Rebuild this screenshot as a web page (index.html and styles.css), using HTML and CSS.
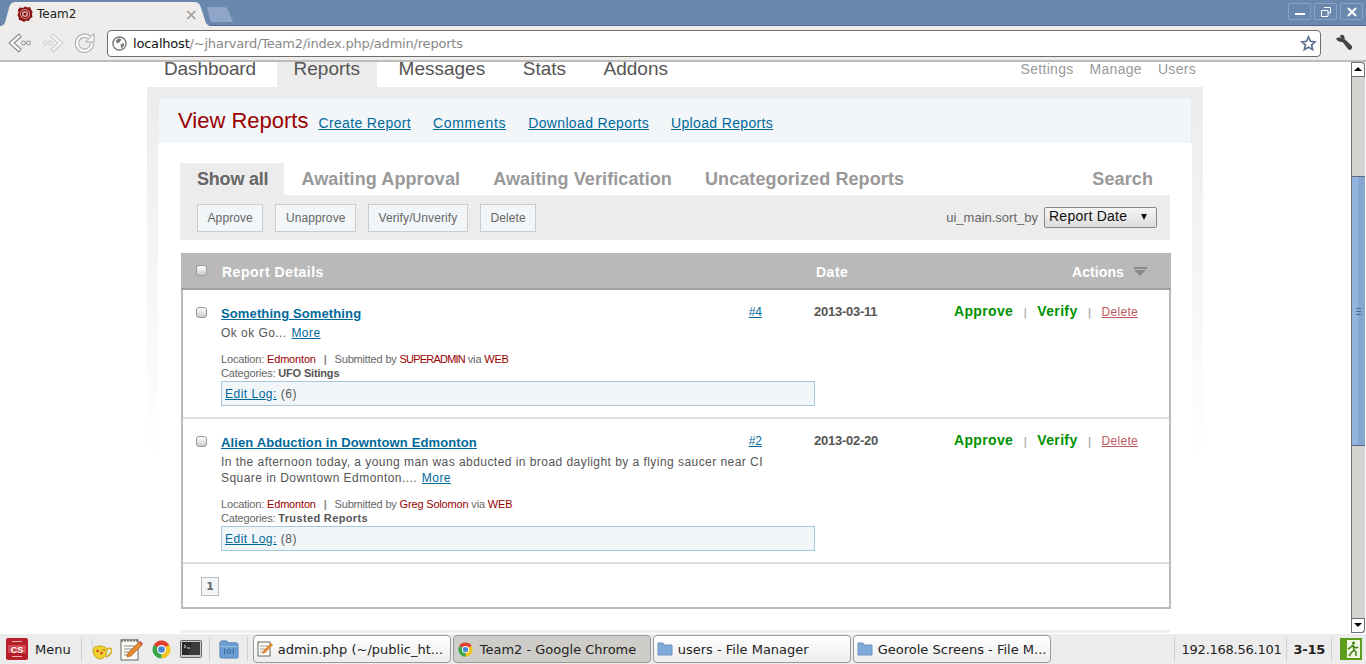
FILE: index.html
```html
<!DOCTYPE html>
<html lang="en">
<head>
  <meta charset="UTF-8" />
  <title>Team2</title>
  <link rel="stylesheet" href="styles.css">
</head>
<body>

<div class="desktop">

  <div class="tabstrip">
    <div class="tab">
      <svg class="favicon" width="16" height="16" viewBox="0 0 16 16"><path d="M3 1.500L6 2 8 .5 10.500 1.500 13 1l1 2.500 1.500 2-.5 3 .5 2.500-2.500 1.500L12 15l-3-.5-2 1.500-2.500-1.500L2 14l-.5-3L.5 9l1-2.500L1 3.500z" fill="#8e1414"/><circle cx="8" cy="8" r="5" fill="#d9a9a9"/><circle cx="8" cy="8" r="3.600" fill="none" stroke="#8e1414" stroke-width="1.200"/><circle cx="8" cy="8" r="1.500" fill="#8e1414"/></svg>
      <span class="tab-title">Team2</span>
      <span class="tab-close">×</span>
    </div>
    <div class="newtab"></div>
    <div class="winbtns">
      <div class="winbtn"><svg width="12" height="12" viewBox="0 0 12 12"><rect x="1" y="7" width="10" height="2" fill="#fff"/></svg></div>
      <div class="winbtn"><svg width="12" height="12" viewBox="0 0 12 12"><path d="M4 1.500h6.500v5.500H8M1.500 4.500H8v6H1.500z" fill="none" stroke="#fff"/></svg></div>
      <div class="winbtn"><svg width="12" height="12" viewBox="0 0 12 12"><path d="M2 2l8 8M10 2l-8 8" stroke="#fff" stroke-width="2"/></svg></div>
    </div>
  </div>

  <div class="toolbar">
    <svg class="navbtn" width="24" height="20" viewBox="0 0 24 20"><path d="M1 10L11 1l2 3-7 6 7 6-2 3z" fill="#fff" stroke="#8f8f8f" stroke-width="1.200" stroke-linejoin="round"/><circle cx="15.500" cy="10" r="2" fill="none" stroke="#8f8f8f"/><circle cx="20.500" cy="10" r="2" fill="none" stroke="#8f8f8f"/></svg>
    <svg class="navbtn" width="22" height="20" viewBox="0 0 22 20"><path d="M21 10L11 1 9 4l7 6-7 6 2 3z" fill="#f6f6f6" stroke="#cfcfcf" stroke-width="1.200" stroke-linejoin="round"/><circle cx="3" cy="10" r="2" fill="none" stroke="#cfcfcf"/><circle cx="8" cy="10" r="2" fill="none" stroke="#cfcfcf"/></svg>
    <svg class="navbtn" width="22" height="22" viewBox="0 0 22 22"><path d="M18 11.500a7.500 7.500 0 1 1-2.500-5.800" fill="none" stroke="#a8a8a8" stroke-width="4.400"/><path d="M18 11.500a7.500 7.500 0 1 1-2.500-5.800" fill="none" stroke="#f8f8f8" stroke-width="2.400"/><path d="M20 1.500v8.500h-8.500z" fill="#f8f8f8" stroke="#a8a8a8"/></svg>
    <div class="omnibox">
      <svg width="15" height="15" viewBox="0 0 16 16"><circle cx="8" cy="8" r="7" fill="#fff" stroke="#7a7a7a" stroke-width="1.500"/><path d="M4 5l3-2.500 3 1-1.500 3L5.500 8zM9 9l3.500-1.500L13 10l-3 3.500z" fill="#7a7a7a"/></svg>
      <span class="url"><b>localhost</b>/~jharvard/Team2/index.php/admin/reports</span>
      <svg width="17" height="17" viewBox="0 0 18 18"><path d="M9 2l2.100 4.700 5 .5-3.800 3.300 1.100 5L9 13l-4.400 2.500 1.100-5L1.900 7.200l5-.5z" fill="#fff" stroke="#5f6f8f" stroke-width="1.800"/></svg>
    </div>
    <svg class="wrench" width="18" height="18" viewBox="0 0 18 18"><path d="M1 4.500L4 3 6 4.500 5 1.500C8-.5 10 2 9.500 5L17 12c.5 1 0 2.500-1 3.500s-2 .5-3-.5L7.500 8C4.500 8.500 2 7 1 4.500z" fill="#444"/></svg>
  </div>

  <div class="viewport">
    <div class="page">

      <div class="topnav">
        <ul class="mainnav">
          <li>Dashboard</li>
          <li class="active">Reports</li>
          <li>Messages</li>
          <li>Stats</li>
          <li>Addons</li>
        </ul>
        <ul class="subnav">
          <li>Settings</li>
          <li>Manage</li>
          <li>Users</li>
        </ul>
      </div>

      <div class="panel">
        <div class="inner">
          <div class="pagehead">
            <h2>View Reports</h2>
            <a href="#">Create Report</a>
            <a class="spaced" href="#">Comments</a>
            <a href="#">Download Reports</a>
            <a href="#">Upload Reports</a>
          </div>

          <div class="content">
            <div class="filters">
              <span class="filter active">Show all</span>
              <span class="filter">Awaiting Approval</span>
              <span class="filter">Awaiting Verification</span>
              <span class="filter">Uncategorized Reports</span>
              <span class="filter search">Search</span>
            </div>
            <div class="actionbar">
              <button class="actbtn">Approve</button>
              <button class="actbtn">Unapprove</button>
              <button class="actbtn">Verify/Unverify</button>
              <button class="actbtn">Delete</button>
              <span class="sortlabel">ui_main.sort_by</span>
              <div class="sortselect">Report Date <i></i></div>
            </div>

            <div class="table">
              <div class="thead">
                <span class="check"></span>
                <span class="th-details">Report Details</span>
                <span class="th-date">Date</span>
                <span class="th-actions">Actions <i></i></span>
              </div>

              <div class="row">
                <span class="check"></span>
                <div class="details">
                  <div class="titleline">
                    <a class="title" href="#">Something Something</a>
                    <a class="num" href="#">#4</a>
                  </div>
                  <p class="desc">Ok ok Go... <a href="#">More</a></p>
                  <p class="meta first">Location: <em>Edmonton</em> <s>|</s> Submitted by <em class="caps">SUPERADMIN</em> via <em>WEB</em></p>
                  <p class="meta">Categories: <b>UFO Sitings</b></p>
                  <div class="editlog"><a href="#">Edit Log:</a> (6)</div>
                </div>
                <div class="date">2013-03-11</div>
                <div class="rowacts">
                  <a class="go" href="#">Approve</a><s>|</s><a class="go" href="#">Verify</a><s>|</s><a class="del" href="#">Delete</a>
                </div>
              </div>

              <div class="row">
                <span class="check"></span>
                <div class="details">
                  <div class="titleline">
                    <a class="title" href="#">Alien Abduction in Downtown Edmonton</a>
                    <a class="num" href="#">#2</a>
                  </div>
                  <p class="desc">In the afternoon today, a young man was abducted in broad daylight by a flying saucer near CI<br>Square in Downtown Edmonton.... <a href="#">More</a></p>
                  <p class="meta first">Location: <em>Edmonton</em> <s>|</s> Submitted by <em>Greg Solomon</em> via <em>WEB</em></p>
                  <p class="meta">Categories: <b class="wide">Trusted Reports</b></p>
                  <div class="editlog"><a href="#">Edit Log:</a> (8)</div>
                </div>
                <div class="date">2013-02-20</div>
                <div class="rowacts">
                  <a class="go" href="#">Approve</a><s>|</s><a class="go" href="#">Verify</a><s>|</s><a class="del" href="#">Delete</a>
                </div>
              </div>

              <div class="pager"><span>1</span></div>
            </div>
            <div class="nextblock"></div>
          </div>
        </div>
      </div>

    </div>

    <div class="scrollbar">
      <div class="sb-btn up"></div>
      <div class="sb-trough top"></div>
      <div class="sb-thumb"><i></i></div>
      <div class="sb-trough bottom"></div>
      <div class="sb-btn down"></div>
    </div>
  </div>

  <div class="taskbar">
    <svg class="csmenu" width="22" height="22" viewBox="0 0 22 22"><rect width="22" height="22" rx="2" fill="#b5202a"/><rect x="2" y="7" width="18" height="8" fill="#cf4a52"/><path d="M6 3.500h10M6 18.500h10" stroke="#e9a9ad"/><text x="11" y="14.500" font-size="9" font-weight="bold" font-family="Liberation Sans" fill="#fff" text-anchor="middle">CS</text></svg>
    <span class="menu-label">Menu</span>
    <span class="sep"></span>
    <svg class="launcher pot" width="22" height="24" viewBox="0 0 22 24"><path d="M3 3C1 6 2 9 4 11" fill="none" stroke="#d8d8d8" stroke-width="1.500"/><circle cx="3" cy="2.500" r="1.500" fill="#e4e4e4"/><path d="M3 13c0-3 4-4 7-4s7 1 7 4c0 5-3 9-7 9s-7-4-7-9z" fill="#eed030" stroke="#c4a215"/><path d="M17 12c4-2 6 1 4 4-1 1.500-3 3-5 4" fill="none" stroke="#d2b020" stroke-width="1.600"/><path d="M6 14l1.500-1.500L9 14l-1.500 1.500zM10 16l1.500-1.500L13 16l-1.500 1.500zM13 13l1-1 1 1-1 1z" fill="#c83020"/></svg>
    <svg class="launcher" width="23" height="23" viewBox="0 0 23 23"><rect x="1" y="2" width="17" height="20" fill="#fbfbf4" stroke="#666"/><path d="M2 1v3M5 1v3M8 1v3M11 1v3M14 1v3M17 1v3" stroke="#555"/><path d="M4 8h11M4 11h11M4 14h8M4 17h6" stroke="#888"/><path d="M7 19l1-4L19 4l3 3L11 18z" fill="#e88a30" stroke="#a04a10" stroke-width=".6"/><path d="M19 4l3 3 1-1-3-3z" fill="#d03030"/></svg>
    <svg class="launcher chrome" width="19" height="19" viewBox="0 0 20 20"><path d="M1.800 5.250A9.500 9.500 0 0 1 18.200 5.250L10 10z" fill="#df3f2f"/><path d="M18.200 5.250A9.500 9.500 0 0 1 10 19.500L10 10z" fill="#f3c520"/><path d="M10 19.500A9.500 9.500 0 0 1 1.800 5.250L10 10z" fill="#3aa648"/><circle cx="10" cy="10" r="4.700" fill="#fff"/><circle cx="10" cy="10" r="3.500" fill="#4a86d8"/></svg>
    <svg class="launcher term" width="22" height="18" viewBox="0 0 22 18"><rect x=".5" y=".5" width="21" height="17" rx="1" fill="#c8c8c8" stroke="#666"/><rect x="2" y="2" width="18" height="13" fill="#2a2a2a"/><path d="M12 2h8v13h-11z" fill="#3c3c3c"/><path d="M4 5l2 1.500L4 8" fill="none" stroke="#ddd"/><rect x="7" y="7.500" width="3" height="1" fill="#ddd"/></svg>
    <span class="sep sep-b"></span>
    <svg class="launcher files" width="20" height="19" viewBox="0 0 21 20"><path d="M1 3c0-1 1-2 2-2h5l2 2h8c1 0 2 1 2 2v13c0 .5-.5 1-1 1H2c-.5 0-1-.5-1-1z" fill="#6d9fd4" stroke="#4d7fb4"/><path d="M1 7h19" stroke="#9cc0e6"/><circle cx="10.500" cy="12" r="2" fill="none" stroke="#2f5f94"/><path d="M6 9v6M15 9v6" stroke="#2f5f94"/></svg>
    <span class="sep sep-c"></span>

    <div class="task">
      <svg width="16" height="16" viewBox="0 0 16 16"><rect x="1" y="1" width="12" height="14" fill="#fbfbf4" stroke="#666"/><path d="M3 5h8M3 8h8M3 11h5" stroke="#999"/><path d="M5 13l1-3 8-8 2 2-8 8z" fill="#e08a30"/></svg>
      <span>admin.php (~/public_ht...</span>
    </div>
    <div class="task current">
      <svg class="taskchrome" width="15" height="15" viewBox="0 0 20 20"><path d="M1.800 5.250A9.500 9.500 0 0 1 18.200 5.250L10 10z" fill="#df3f2f"/><path d="M18.200 5.250A9.500 9.500 0 0 1 10 19.500L10 10z" fill="#f3c520"/><path d="M10 19.500A9.500 9.500 0 0 1 1.800 5.250L10 10z" fill="#3aa648"/><circle cx="10" cy="10" r="4.700" fill="#fff"/><circle cx="10" cy="10" r="3.500" fill="#4a86d8"/></svg>
      <span>Team2 - Google Chrome</span>
    </div>
    <div class="task">
      <svg width="16" height="14" viewBox="0 0 16 14"><path d="M1 1h5l1 2h8v10H1z" fill="#7fa8d6" stroke="#6b94c2"/></svg>
      <span>users - File Manager</span>
    </div>
    <div class="task">
      <svg width="16" height="14" viewBox="0 0 16 14"><path d="M1 1h5l1 2h8v10H1z" fill="#7fa8d6" stroke="#6b94c2"/></svg>
      <span>Georole Screens - File M...</span>
    </div>

    <span class="sep tray-start"></span>
    <span class="tray">192.168.56.101</span>
    <span class="sep"></span>
    <span class="tray clock">3-15</span>
    <span class="sep"></span>
    <svg class="exit" width="22" height="22" viewBox="0 0 22 22"><rect width="22" height="22" fill="#5c9e1c"/><rect x="7" y="2" width="13" height="18" fill="#eef6e4"/><circle cx="13.500" cy="5" r="1.500" fill="#3c7e0c"/><path d="M13 7l-3 3-2 1M13 7l1 5 2 2v4M14 12l-3 3-2 3M13 8l3 2 2-1" fill="none" stroke="#3c7e0c" stroke-width="1.500"/></svg>
  </div>

</div>

</body>
</html>
```

FILE: styles.css
```css
html, body {
  margin: 0;
  padding: 0;
  height: 100%;
  overflow: hidden;
}

body {
  font-family: "Liberation Sans", Arial, sans-serif;
  color: #555;
}

p, ul, h2 {
  margin: 0;
  padding: 0;
}

ul {
  list-style: none;
}

s {
  text-decoration: none;
}

em {
  font-style: normal;
}

.desktop {
  width: 1366px;
  height: 664px;
  display: flex;
  flex-direction: column;
}

/* browser chrome */

.tabstrip {
  height: 26px;
  flex: none;
  background: #6a88ae;
  border-bottom: 1px solid #4f6a8c;
  box-sizing: border-box;
  display: flex;
  align-items: flex-end;
}

.tab {
  width: 212px;
  height: 24px;
  margin-bottom: -1px;
  background: #eeedeb;
  clip-path: path("M0 24C4 24 5 21 6 17L9 6C10 2 12 0 16 0L194 0C198 0 200 2 201 6L205 18C206 22 208 24 212 24Z");
  display: flex;
  align-items: center;
  box-sizing: border-box;
  padding-left: 17px;
  font-family: "DejaVu Sans", sans-serif;
  font-size: 12px;
  color: #222;
}

.favicon {
  margin-right: 4px;
}

.tab-title {
  flex: 1;
}

.tab-close {
  font-size: 16px;
  color: #999;
  margin-right: 14px;
}

.newtab {
  width: 26px;
  height: 15px;
  margin: 0 0 3px -5px;
  background: #8fa6c8;
  clip-path: path("M0 0L17 0C19 0 20 1 21 3L26 15L6 15C4 15 3 14 3 12Z");
}

.winbtns {
  margin-left: auto;
  margin-bottom: 5px;
  margin-right: 3px;
  display: flex;
  gap: 3px;
}

.winbtn {
  width: 23px;
  height: 17px;
  border: 1px solid #8aa3c2;
  border-radius: 2px;
  box-sizing: border-box;
  display: flex;
  align-items: center;
  justify-content: center;
}

.toolbar {
  height: 36px;
  flex: none;
  background: #eeedeb;
  border-bottom: 2px solid #bdbcb8;
  box-sizing: border-box;
  display: flex;
  align-items: center;
  padding-left: 8px;
}

.navbtn {
  margin-right: 10px;
}

.omnibox {
  width: 1214px;
  height: 27px;
  margin-left: 1px;
  background: #fff;
  border: 1px solid #6e6e6e;
  border-radius: 4px;
  box-sizing: border-box;
  display: flex;
  align-items: center;
  padding: 0 3px 0 4px;
  font-family: "DejaVu Sans", sans-serif;
  font-size: 13px;
  letter-spacing: -.2px;
  color: #888;
}

.url {
  margin-left: 6px;
  flex: 1;
}

.url b {
  font-weight: normal;
  color: #111;
}

.wrench {
  margin-left: 14px;
}

/* page area */

.viewport {
  height: 572px;
  flex: none;
  display: flex;
  overflow: hidden;
  background: #fff;
}

.page {
  flex: 1;
  min-width: 0;
  overflow: hidden;
  padding-left: 147px;
}

.topnav {
  width: 1056px;
  height: 25px;
  display: flex;
  justify-content: space-between;
}

.mainnav {
  display: flex;
  font-size: 19px;
  line-height: 14px;
  color: #555;
}

.mainnav li {
  padding: 0 17px;
  height: 25px;
  margin-right: 3.5px;
}

.mainnav li:first-child {
  letter-spacing: -.1px;
}

.mainnav li.active {
  background: #ececec;
  margin-right: 4.5px;
}

.subnav {
  display: flex;
  gap: 16px;
  font-size: 14px;
  line-height: 14px;
  letter-spacing: .3px;
  color: #999;
  padding-right: 7px;
}

.panel {
  width: 1056px;
  padding: 11px 11px 0;
  box-sizing: border-box;
  background: linear-gradient(#ececec, #fff 370px);
}

.inner {
  background: #fff;
}

.pagehead {
  height: 45px;
  background: #f2f6f9;
  border: 1px solid #e6edf1;
  border-bottom: 0;
  box-sizing: border-box;
  display: flex;
  align-items: center;
  padding-left: 19px;
  font-size: 14px;
}

.pagehead h2 {
  font-size: 22px;
  font-weight: normal;
  color: #990000;
  margin-right: 10px;
}

.pagehead a {
  color: #00699b;
  margin-right: 22px;
  padding-top: 4px;
  letter-spacing: .35px;
}

.pagehead a.spaced {
  letter-spacing: .7px;
}

.content {
  padding: 20px 22px 0;
}

/* filter tabs */

.filters {
  display: flex;
  height: 32px;
  font-size: 18px;
  font-weight: bold;
  letter-spacing: .1px;
  color: #999;
  line-height: 32px;
}

.filter {
  padding: 0 16px 0 17px;
}

.filter.active {
  background: #ececec;
  color: #666;
  letter-spacing: -.2px;
}

.filter.search {
  margin-left: auto;
  padding-right: 17px;
}

.actionbar {
  height: 45px;
  background: #ececec;
  display: flex;
  align-items: center;
  padding-left: 17px;
}

.actbtn {
  height: 28px;
  margin-right: 12px;
  padding: 0 9.5px;
  background: #f2f6f9;
  border: 1px solid #ccc;
  font-family: "Liberation Sans", Arial, sans-serif;
  font-size: 12px;
  letter-spacing: .1px;
  color: #666;
}

.sortlabel {
  margin-left: auto;
  font-size: 13px;
  color: #666;
  margin-right: 6px;
}

.sortselect {
  width: 113px;
  height: 21px;
  margin-right: 13px;
  background: linear-gradient(#f6f6f6, #dcdcdc);
  border: 1px solid #888;
  border-radius: 2px;
  box-sizing: border-box;
  padding-left: 4px;
  font-size: 14px;
  letter-spacing: .25px;
  line-height: 17px;
  color: #111;
  position: relative;
}

.sortselect i {
  position: absolute;
  right: 9px;
  top: 6px;
  border-left: 3px solid transparent;
  border-right: 3px solid transparent;
  border-top: 6px solid #111;
}

/* table */

.table {
  margin: 13px -1px 0 1px;
  border: 2px solid #bbb;
  border-top: 0;
}

.thead {
  height: 37px;
  margin: 0 -2px;
  padding-top: 2px;
  background: #b9b9b9;
  border-bottom: 2px solid #a0a0a0;
  box-sizing: border-box;
  display: flex;
  align-items: center;
  color: #fff;
  font-size: 14px;
  font-weight: bold;
  letter-spacing: .5px;
  position: relative;
}

.check {
  display: block;
  width: 11px;
  height: 11px;
  flex: none;
  box-sizing: border-box;
  background: linear-gradient(#fff, #ccc);
  border: 1px solid #999;
  border-radius: 3px;
}

.thead .check {
  margin-left: 15px;
  margin-bottom: 2px;
}

.th-details {
  margin-left: 15px;
  width: 594px;
}

.th-actions {
  margin-left: auto;
  margin-right: 24px;
  letter-spacing: .1px;
}

.th-actions i {
  display: inline-block;
  margin-left: 6px;
  width: 13px;
  height: 2px;
  border-top: 2px solid #888;
  position: relative;
  top: -8px;
  box-sizing: border-box;
}

.th-actions i::after {
  content: "";
  position: absolute;
  left: 0;
  top: 1px;
  border-left: 6.5px solid transparent;
  border-right: 6.5px solid transparent;
  border-top: 6px solid #888;
}

.row {
  display: flex;
  align-items: flex-start;
  padding: 16px 0 11px 13px;
  border-bottom: 2px solid #ddd;
  font-size: 12px;
}

.row .check {
  margin-right: 14px;
  margin-top: 1px;
}

.details {
  width: 594px;
  flex: none;
}

.titleline {
  display: flex;
  justify-content: space-between;
  padding-right: 53px;
}

.title {
  font-size: 13px;
  font-weight: bold;
  letter-spacing: .12px;
  color: #00699b;
}

.num {
  font-size: 12px;
  color: #00699b;
  position: relative;
  top: -1px;
}

.desc {
  margin-top: 4px;
  font-size: 12px;
  line-height: 16px;
  letter-spacing: .45px;
  color: #555;
}

.desc a {
  color: #00699b;
  margin-left: 1px;
}

.meta {
  font-size: 11px;
  line-height: 14px;
  letter-spacing: -.17px;
  color: #666;
}

.meta.first {
  margin-top: 11px;
}

.meta em {
  color: #990000;
}

.meta em.caps {
  letter-spacing: -.8px;
}

.meta s {
  font-weight: bold;
  margin: 0 5px;
  color: #888;
}

.meta b {
  color: #555;
}

.meta b.wide {
  letter-spacing: .35px;
}

.editlog {
  height: 25px;
  margin-top: 1px;
  background: #f2f6f9;
  border: 1px solid #a3c9de;
  box-sizing: border-box;
  padding-left: 3px;
  line-height: 24px;
  font-size: 12px;
  letter-spacing: .5px;
}

.editlog a {
  color: #00699b;
}

.date {
  font-size: 13px;
  font-weight: bold;
  letter-spacing: -.25px;
  color: #555;
  margin-left: -1px;
  margin-top: -2px;
  width: 140px;
}

.rowacts {
  display: flex;
  align-items: baseline;
  font-size: 14px;
  font-weight: bold;
  margin-top: -3px;
}

.rowacts s {
  color: #aaa;
  font-family: "DejaVu Sans", sans-serif;
  font-size: 11px;
  margin: 0 10px;
}

.rowacts .go {
  color: #009100;
  letter-spacing: .35px;
  text-decoration: none;
}

.rowacts .del {
  color: #bd5a5f;
  font-size: 12px;
  font-weight: normal;
  letter-spacing: .3px;
}

.pager {
  height: 43px;
  padding: 13px 0 0 18px;
  box-sizing: border-box;
}

.pager span {
  display: block;
  width: 18px;
  height: 19px;
  background: #f2f6f9;
  border: 1px solid #bbb;
  box-sizing: border-box;
  text-align: center;
  font-family: "DejaVu Sans", sans-serif;
  font-size: 11px;
  font-weight: bold;
  line-height: 17px;
  color: #666;
}

.nextblock {
  height: 3px;
  margin-top: 21px;
  background: #f0f0f0;
}

/* scrollbar */

.scrollbar {
  width: 14px;
  height: 571px;
  margin-right: 1px;
  flex: none;
  display: flex;
  flex-direction: column;
  border-left: 1px solid #6a6f78;
  box-sizing: border-box;
  background: #d6d4d0;
}

.sb-btn {
  height: 15px;
  flex: none;
  background: #fff;
  border: 1px solid #6a6f78;
  border-left: 0;
  box-sizing: border-box;
  position: relative;
}

.sb-btn.up {
  border-radius: 0 4px 0 0;
}

.sb-btn.down {
  border-radius: 0 0 4px 0;
}

.sb-btn::after {
  content: "";
  position: absolute;
  left: 2px;
  top: 4px;
  border-left: 4px solid transparent;
  border-right: 4px solid transparent;
}

.sb-btn.up::after {
  border-bottom: 4px solid #000;
}

.sb-btn.down::after {
  border-top: 4px solid #000;
}

.sb-trough.top {
  height: 99px;
}

.sb-trough.bottom {
  flex: 1;
}

.sb-thumb {
  height: 270px;
  background: linear-gradient(90deg, #93b4de 50%, #86a6d2 50%);
  border-top: 1px solid #5d6a80;
  border-bottom: 1px solid #5d6a80;
  box-sizing: border-box;
  display: flex;
  align-items: center;
  justify-content: center;
}

.sb-thumb i {
  width: 5px;
  height: 7px;
  border-top: 1px solid #4d6a90;
  border-bottom: 1px solid #4d6a90;
  box-sizing: border-box;
  background: linear-gradient(transparent 2px, #4d6a90 2px, #4d6a90 3px, transparent 3px);
}

/* desktop panel */

.taskbar {
  height: 30px;
  flex: none;
  background: #ececec;
  display: flex;
  align-items: center;
  padding-left: 6px;
  font-family: "DejaVu Sans", sans-serif;
  font-size: 13px;
  color: #222;
}

.menu-label {
  margin-left: 7px;
  margin-right: 10px;
}

.sep {
  width: 1px;
  height: 24px;
  background: #cfcfcf;
  flex: none;
}

.sep-b {
  margin-left: 7px;
}

.sep-c {
  margin-left: 8px;
  margin-right: 3px;
}

.launcher {
  margin-left: 8px;
  flex: none;
}

.launcher.term,
.launcher.files,
.launcher.chrome {
  margin-left: 9px;
}

.task {
  width: 198px;
  height: 28px;
  margin-left: 2px;
  background: linear-gradient(#fff, #ededed);
  border: 1px solid #9a9a9a;
  border-radius: 4px;
  box-sizing: border-box;
  display: flex;
  align-items: center;
  padding-left: 3px;
  gap: 5px;
  white-space: nowrap;
  overflow: hidden;
  flex: none;
}

.task.current {
  background: #cfcdc9;
}

.taskchrome {
  margin: 0 2px 0 1px;
}

.tray-start {
  margin-left: auto;
}

.tray {
  padding: 0 5px 0 7px;
  letter-spacing: -.25px;
}

.tray.clock {
  padding: 0 6px;
  letter-spacing: -.25px;
  font-weight: bold;
}

.exit {
  margin: 0 4px 0 8px;
}
```
